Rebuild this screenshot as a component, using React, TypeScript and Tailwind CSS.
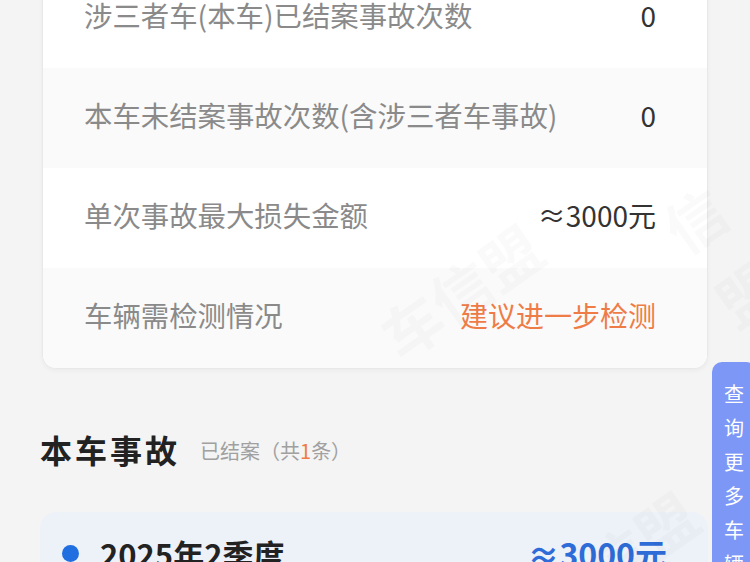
const rows = [
  { label: '涉三者车(本车)已结案事故次数', value: '0', tone: 'text-[#333]', bg: 'bg-white' },
  { label: '本车未结案事故次数(含涉三者车事故)', value: '0', tone: 'text-[#333]', bg: 'bg-[#fafafa]' },
  { label: '单次事故最大损失金额', value: '≈3000元', tone: 'text-[#333]', bg: 'bg-white' },
  { label: '车辆需检测情况', value: '建议进一步检测', tone: 'text-[#ef7c47]', bg: 'bg-[#fafafa]' },
];

const font = { fontFamily: '"Noto Sans CJK SC", "Noto Sans", sans-serif' };

function Watermark({ className, text = '车信盟' }: { className: string; text?: string }) {
  return (
    <span
      className={`pointer-events-none absolute select-none text-[60px] font-bold text-black/[0.02] -rotate-[35deg] ${className}`}
    >
      {text}
    </span>
  );
}

export default function App() {
  return (
    <div className="relative min-h-[562px] overflow-hidden bg-[#f4f4f4] pl-10 pr-[42px]" style={font}>
      <div className="-mt-[33px] ml-[2px] overflow-hidden rounded-b-[14px] border border-[#e8e8e8] bg-white shadow-[0_2px_4px_rgba(0,0,0,0.04)]">
        {rows.map((r) => (
          <div key={r.label} className={`flex h-[100px] items-center justify-between pb-[6px] pl-[41px] pr-[51px] ${r.bg}`}>
            <span className="text-[28.4px] leading-none text-[#8a8a8a]">{r.label}</span>
            <span className={`text-[28px] leading-none ${r.tone}`}>{r.value}</span>
          </div>
        ))}
      </div>

      <div className="mt-[64px] flex items-center gap-[20px]">
        <span className="text-[32px] font-bold leading-none tracking-[3px] text-[#222]">本车事故</span>
        <span className="pt-[4px] text-[20px] leading-none text-[#a0a0a0]">
          已结案（共<span className="text-[#ef7c47]">1</span>条）
        </span>
      </div>

      <div className="mt-[47px] rounded-[16px] bg-[#edf1f8] px-[22px] pt-[25px] pb-6">
        <div className="flex items-center justify-between pr-[19px]">
          <div className="flex items-center gap-[21px]">
            <span className="h-[17px] w-[17px] rounded-full bg-[#1f6fe0]" />
            <span className="text-[31px] font-bold leading-none text-[#222]">2025年2季度</span>
          </div>
          <span className="text-[32px] font-bold leading-none text-[#2e6cd8]">≈3000元</span>
        </div>
      </div>

      <Watermark className="left-[370px] top-[245px]" />
      <Watermark className="left-[690px] top-[165px]" text="信盟" />
      <Watermark className="left-[580px] top-[495px]" text="信盟" />

      <div className="absolute left-[712px] top-[362px] flex w-[44px] flex-col items-center gap-[10px] rounded-tl-[10px] rounded-tr-[10px] bg-[#7d97f6] pt-[20px] pb-4 text-[20px] leading-[24px] text-white">
        {'查询更多车辆'.split('').map((c, i) => (
          <span key={i}>{c}</span>
        ))}
      </div>
    </div>
  );
}
